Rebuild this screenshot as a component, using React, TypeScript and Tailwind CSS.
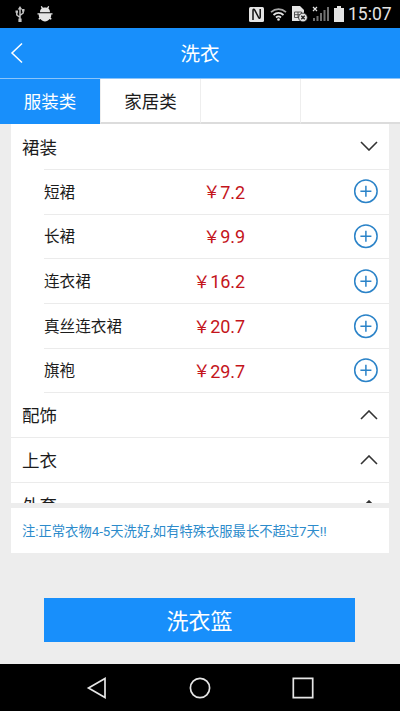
interface Item {
  name: string
  price: string
}

interface Category {
  title: string
  items?: Item[]
}

const TABS = ['服装类', '家居类', '', '']

const CATEGORIES: Category[] = [
  {
    title: '裙装',
    items: [
      { name: '短裙', price: '7.2' },
      { name: '长裙', price: '9.9' },
      { name: '连衣裙', price: '16.2' },
      { name: '真丝连衣裙', price: '20.7' },
      { name: '旗袍', price: '29.7' },
    ],
  },
  { title: '配饰' },
  { title: '上衣' },
  { title: '外套' },
]

export default function App() {
  return (
    <div className="flex h-[711px] w-[400px] flex-col overflow-hidden bg-[#ededed] font-['Roboto','Noto_Sans_CJK_SC',sans-serif] text-[#1c1c1c]">
      <StatusBar />

      <header className="grid h-[50px] shrink-0 grid-cols-3 items-center bg-[#188ffb] text-white">
        <svg className="ml-[10px] h-[22px] w-[14px]" viewBox="0 0 14 22" fill="none" stroke="currentColor" strokeWidth="1.5">
          <path d="M12 1.5 2 11l10 9.5" />
        </svg>
        <h1 className="pt-1 text-center text-[19.5px]">洗衣</h1>
      </header>

      <nav className="grid h-[46px] shrink-0 grid-cols-4 border-t border-[#8cc5fa] bg-white text-[17.5px]">
        {TABS.map((tab, i) => (
          <button
            key={i}
            className={
              i === 0
                ? 'bg-[#188ffb] pt-0.5 text-white'
                : 'border-b-2 border-l border-b-[#dcdcdc] border-l-[#eeeeee] pt-1'
            }
          >
            {tab}
          </button>
        ))}
      </nav>

      <main className="mx-[11px] h-[379px] shrink-0 overflow-hidden bg-white">
        {CATEGORIES.map((category) => (
          <CategorySection key={category.title} category={category} />
        ))}
      </main>

      <p className="mx-[11px] mt-[5px] flex h-[45px] shrink-0 items-center bg-white pt-[3px] pl-[11px] text-[13.3px] whitespace-nowrap text-[#2c8bcb]">
        注:正常衣物4-5天洗好,如有特殊衣服最长不超过7天!!
      </p>

      <button className="mr-[45px] ml-[44px] mt-[45px] h-11 shrink-0 bg-[#188ffb] pt-[3px] text-[22px] leading-none text-white">
        洗衣篮
      </button>

      <SystemNav />
    </div>
  )
}

function CategorySection({ category }: { category: Category }) {
  const open = Boolean(category.items)
  return (
    <section>
      <div
        className={`flex h-[44.8px] items-center justify-between pr-[11px] pl-[11px] ${
          open ? '' : 'border-b border-[#ebebeb]'
        }`}
      >
        <h2 className="pt-[3px] text-[17.5px]">{category.title}</h2>
        <Chevron open={open} />
      </div>
      {category.items?.map((item) => (
        <div
          key={item.name}
          className="ml-[33px] flex h-[44.8px] items-center border-t border-[#ebebeb] pr-[11px] last:h-[45.2px] last:border-b"
        >
          <span className="w-[120px] pt-[3px] text-[15.6px]">{item.name}</span>
          <span className="flex w-[81px] items-center justify-end pt-px text-[18px] text-[#c4141b]">
            <span className="pt-0.5 text-[17px]">￥</span>
            <span className="tracking-[-0.1px]">{item.price}</span>
          </span>
          <svg className="ml-auto size-[25px]" viewBox="0 0 25 25" fill="none" stroke="#2b83c8" strokeWidth="1.5">
            <circle cx="12.9" cy="12.2" r="11.2" />
            <path d="M12.9 6.700v11M7.400 12.200h11" />
          </svg>
        </div>
      ))}
    </section>
  )
}

function Chevron({ open }: { open: boolean }) {
  return (
    <svg className="h-[10px] w-[18px]" viewBox="0 0 18 10" fill="none" stroke="#333" strokeWidth="1.6">
      <path d={open ? 'M1 1l8 8 8-8' : 'M1 9l8-8 8 8'} />
    </svg>
  )
}

function StatusBar() {
  return (
    <div className="flex h-7 shrink-0 items-center bg-black pr-[8px] pl-[15px] text-[#e4e4e4]">
      {/* usb */}
      <svg className="h-4 w-[10px]" viewBox="0 0 10 16" fill="none" stroke="#c4c4c4" strokeWidth="1.5">
        <path d="M5 2v12M5 11.500 1.800 9V5M5 9.500l3.200-2.500V4" />
        <path d="M5 0 2.700 3.500h4.600zM3.400 12.500h3.200V16H3.400zM.5 4.500h2.500v2.200H.5zM7 3h2.500v2.400H7z" fill="#c4c4c4" stroke="none" />
      </svg>
      {/* debug */}
      <svg className="ml-3 h-4 w-4" viewBox="0 0 16 16" fill="#e4e4e4">
        <path d="M3 6.200C3 4.500 3.500 3.200 4.600 2.500L3.800.5 4.800 0 6 1.800c1.200-.4 2.800-.4 4 0L11.200 0l1 .5-.8 2C12.500 3.200 13 4.500 13 6.200z" />
        <path d="M.5 7.200h15v1.400h-1.300c.1 1.200-.1 2.200-.6 3l1.100 1.200-.9 1-1.200-.9c-2.400 3.300-6.800 3.300-9.200 0l-1.200.9-.9-1 1.100-1.200c-.5-.8-.7-1.800-.6-3H.5z" />
      </svg>

      <div className="ml-auto flex items-center">
        {/* nfc */}
        <svg className="h-[15px] w-[15px]" viewBox="0 0 15 15">
          <rect width="15" height="15" rx="1.500" fill="#e4e4e4" />
          <path d="M4 13V3.500C4 2 5 2 5.800 3.200l3.800 7.300c.6 1.200 1.600 1 1.600-.5V2" fill="none" stroke="#111" strokeWidth="1.500" />
        </svg>
        {/* wifi */}
        <svg className="ml-[6px] h-[14px] w-[17px]" viewBox="0 0 17 14" fill="none" stroke="#e4e4e4" strokeWidth="1.800">
          <path d="M1 5.200c4.500-4 10.500-4 15 0" stroke="#a5a5a5" />
          <path d="M3.500 8c3-2.700 7-2.700 10 0M6 10.500c1.500-1.300 3.500-1.300 5 0" />
          <circle cx="8.500" cy="12.500" r="1.300" fill="#e4e4e4" stroke="none" />
        </svg>
        {/* sim error */}
        <svg className="ml-[5px] h-4 w-4" viewBox="0 0 16 16">
          <path d="M0 0h8l4 4v11H0z" fill="#e4e4e4" />
          <path d="M2.500 6h7v5.500h-7zM2.500 8.700h7M6 6v5.500" fill="none" stroke="#444" strokeWidth=".9" />
          <circle cx="11" cy="11.500" r="4.400" fill="#e4e4e4" stroke="#111" strokeWidth=".8" />
          <path d="m9.300 9.800 3.400 3.400m0-3.400-3.400 3.400" stroke="#222" strokeWidth="1.400" />
        </svg>
        {/* signal */}
        <svg className="ml-[4px] h-4 w-[17px]" viewBox="0 0 17 16">
          <path d="M1 12h2v3H1zM4.500 10h2v5h-2zM8 7h2v8H8zM11.500 4h2v11h-2zM15 1h2v14h-2z" fill="#707070" />
          <path d="m1 1 4 4m0-4L1 5" stroke="#e4e4e4" strokeWidth="1.200" />
        </svg>
        {/* battery */}
        <svg className="ml-[5px] h-4 w-[10px]" viewBox="0 0 10 16" fill="#e4e4e4">
          <path d="M3 0h4v2h3v14H0V2h3z" />
        </svg>
        <span className="ml-[4px] w-[44px] pt-0.5 text-[17.5px] leading-none whitespace-nowrap">15:07</span>
      </div>
    </div>
  )
}

function SystemNav() {
  return (
    <footer className="mt-auto flex h-[47px] shrink-0 items-center justify-between bg-black px-[86px] text-[#e6e6e6]">
      <svg className="h-6 w-[22px]" viewBox="0 0 22 24" fill="none" stroke="currentColor" strokeWidth="1.700">
        <path d="M19 2.500v19L2.500 12z" />
      </svg>
      <svg className="h-6 w-[22px]" viewBox="0 0 22 24" fill="none" stroke="currentColor" strokeWidth="1.700">
        <circle cx="11" cy="12" r="9.600" />
      </svg>
      <svg className="h-6 w-[22px]" viewBox="0 0 22 24" fill="none" stroke="currentColor" strokeWidth="1.700">
        <path d="M1.300 2.300h19.400v19.400H1.300z" />
      </svg>
    </footer>
  )
}
